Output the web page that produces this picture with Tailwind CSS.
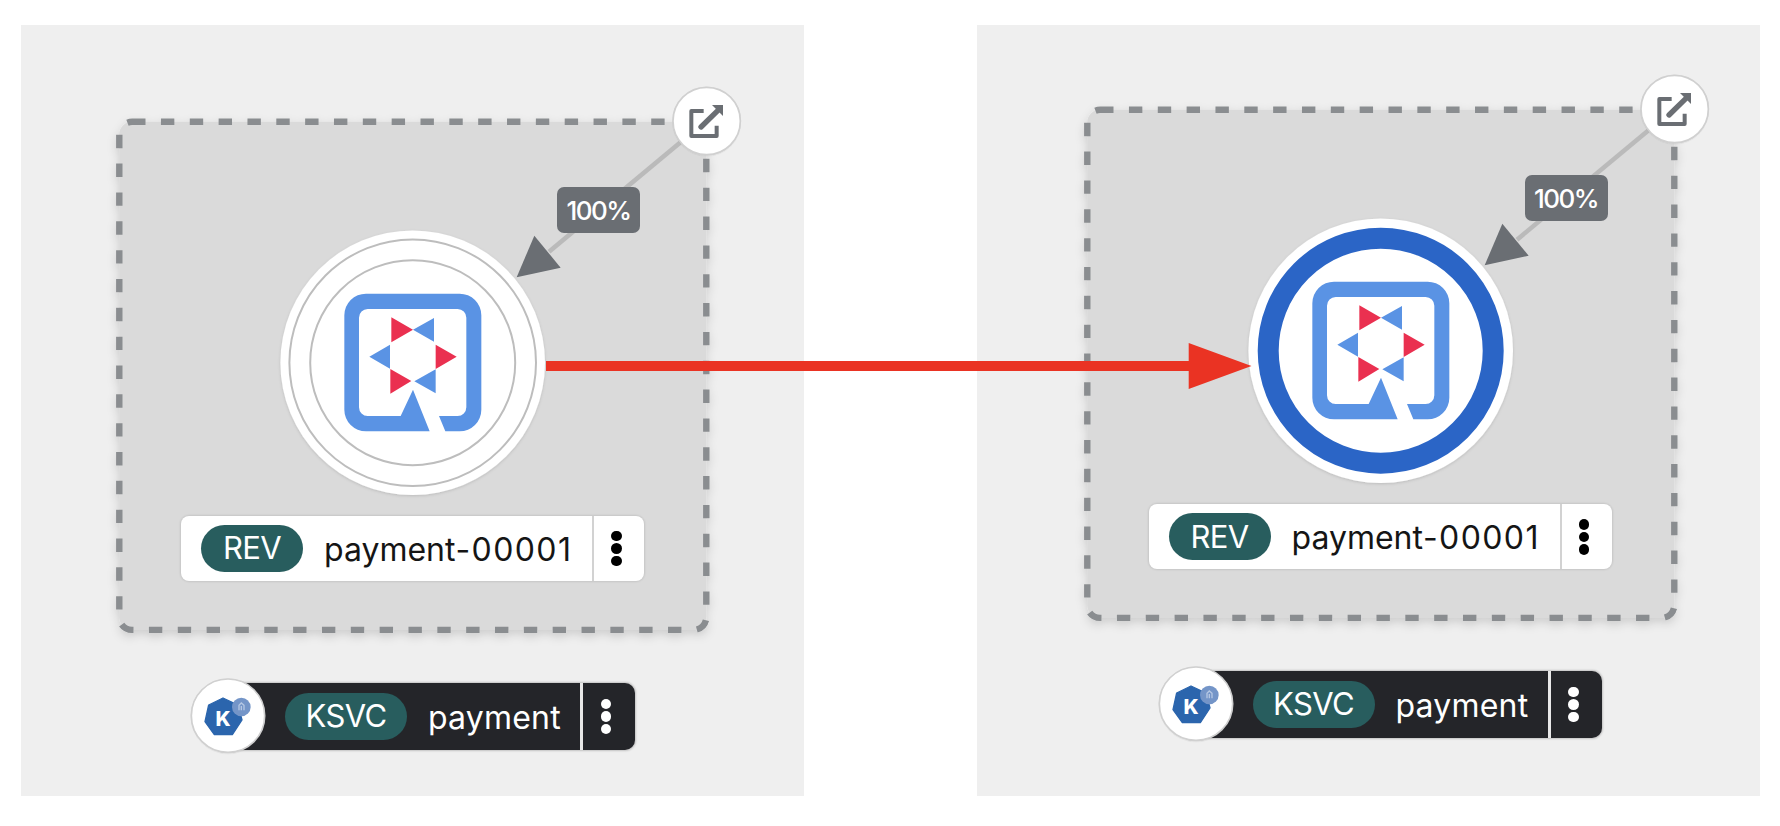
<!DOCTYPE html>
<html lang="en">
<head>
<meta charset="utf-8">
<title>Topology</title>
<script src="https://cdn.jsdelivr.net/npm/@tailwindcss/browser@4"></script>
</head>
<body class="relative h-[826px] w-[1780px] overflow-hidden bg-white font-['Inter',sans-serif]">

<!-- Shared shapes, in panel coordinates -->
<svg class="absolute size-0" aria-hidden="true">
  <defs>
    <filter id="soft" x="-10%" y="-10%" width="120%" height="120%"><feDropShadow dx="0" dy="4" stdDeviation="5" flood-color="#030303" flood-opacity=".14"/></filter>
    <filter id="lift" x="-20%" y="-20%" width="140%" height="140%"><feDropShadow dx="0" dy="1" stdDeviation="1.5" flood-color="#030303" flood-opacity=".14"/></filter>
    <g id="group">
      <rect x="98.3" y="96.8" width="587" height="508.1" rx="12.8" fill="#dadada" stroke="#8a8d90" stroke-width="6.4" stroke-dasharray="13.4 15.44" filter="url(#soft)"/>
      <path d="M685.4 95.8 528 226.7" stroke="#bababa" stroke-width="4.6"/>
    </g>
    <g id="quarkus" transform="translate(249 195) scale(.33333)">
      <path fill="#5a93e4" d="M288 221H569A65 65 0 0 1 634 286V569A65 65 0 0 1 569 634H526L507 588H563A26 26 0 0 0 589 562V293A26 26 0 0 0 563 267H293A26 26 0 0 0 267 293V562A26 26 0 0 0 293 588H392L429 509 479 634H288A65 65 0 0 1 223 569V286A65 65 0 0 1 288 221Z"/>
      <path fill="#5a93e4" d="M429 329 492 294V365ZM298 410 360 374V446ZM433 484 497 448V520Z"/>
      <path fill="#ea3050" d="M429 329 364 292V367ZM560 410 497 374V447ZM424 483 361 447V521Z"/>
    </g>
    <g id="decorators">
      <g transform="translate(409 35) scale(.33333)">
        <path fill="#6a6e73" d="M260 652 313 527 392 623Z"/>
        <circle cx="830" cy="183" r="101" fill="#fff" stroke="#d0d0d0" stroke-width="5" filter="url(#lift)"/>
        <path fill="none" stroke="#6a6e73" stroke-width="12" stroke-linejoin="round" d="M821 153H784V228H860V197"/>
        <path fill="none" stroke="#6a6e73" stroke-width="16" stroke-linecap="round" d="M813 201 864 151"/>
        <path fill="#6a6e73" d="M846 135H879V168Z"/>
      </g>
    </g>
    <g id="knative" transform="translate(159 645) scale(.33333)">
      <circle cx="144" cy="137" r="110" fill="#fff" stroke="#d0d0d0" stroke-width="5" filter="url(#lift)"/>
      <path fill="#2b65ad" stroke="#2b65ad" stroke-width="4" stroke-linejoin="round" d="M129 84 174 105 186 150 157 194H103L75 155 86 105Z"/>
      <circle cx="184" cy="111" r="28" fill="#7495c8"/>
      <path fill="none" stroke="#b5c7e3" stroke-width="4" d="M177 121V106L184 99 192 106V121M184 108V121"/>
    </g>
  </defs>
</svg>

<main class="flex h-[826px] gap-[173px] pt-[25px] pl-[21px]">

  <section class="relative h-[771px] w-[783px] bg-[#efefef]">
    <div class="absolute top-0 left-0 h-[771px] w-[771px]">
      <svg class="absolute inset-0 overflow-visible" width="771" height="771">
        <use href="#group"/>
        <circle cx="391.7" cy="337.7" r="132.3" fill="#fff" filter="url(#lift)"/>
        <circle cx="391.7" cy="337.7" r="123.3" fill="none" stroke="#bdbdbd" stroke-width="2"/>
        <circle cx="391.7" cy="337.7" r="102.5" fill="none" stroke="#bdbdbd" stroke-width="2"/>
        <use href="#quarkus"/>
        <use href="#decorators"/>
      </svg>
      <div class="absolute top-[161.5px] left-[536px] flex h-[46px] w-[83px] items-center justify-center rounded-[7px] bg-[#6a6e73] pt-[2px] text-[26px] font-medium tracking-[-1.5px] text-white">100%</div>
      <div class="absolute top-[491px] left-[160px] flex h-[65px] w-[463px] items-center rounded-[8px] bg-white pl-[20px] shadow-[0_0_2px_1px_#00000018]">
        <span class="flex h-[47px] w-[102px] items-center justify-center rounded-full bg-[#285d5e] text-[31px] tracking-[-0.6px] text-white">REV</span>
        <span class="ml-[21px] w-[268px] whitespace-nowrap pt-[3px] text-[32px] text-[#151515]">payment<span class="tracking-[1.4px]">-00001</span></span>
        <span class="flex h-full flex-1 flex-col items-center justify-center gap-[2px] border-l-2 border-[#d2d2d2] pr-[5px]"><i class="size-[10.5px] rounded-full bg-black"></i><i class="size-[10.5px] rounded-full bg-black"></i><i class="size-[10.5px] rounded-full bg-black"></i></span>
      </div>
      <div class="absolute top-[657.5px] left-[208px] flex h-[67.5px] w-[405.5px] items-center rounded-[10px] bg-[#242529] pl-[56px] shadow-[0_0_2px_1px_#00000030]">
        <span class="flex h-[47px] w-[122px] items-center justify-center rounded-full bg-[#285d5e] text-[31px] tracking-[-0.6px] text-white">KSVC</span>
        <span class="ml-[21px] w-[152px] whitespace-nowrap pt-[3px] text-[32px] tracking-[0.2px] text-white">payment</span>
        <span class="flex h-full flex-1 flex-col items-center justify-center gap-[2px] border-l-3 border-[#e8e8e8] pr-[6px]"><i class="size-[10.5px] rounded-full bg-white"></i><i class="size-[10.5px] rounded-full bg-white"></i><i class="size-[10.5px] rounded-full bg-white"></i></span>
      </div>
      <svg class="absolute inset-0 overflow-visible" width="771" height="771"><use href="#knative"/><text x="202" y="700.5" text-anchor="middle" fill="#fff" font-size="20.5" font-weight="800">K</text></svg>
    </div>
  </section>

  <section class="relative h-[771px] w-[783px] bg-[#efefef]">
    <div class="absolute top-[-11.7px] left-[11.5px] h-[771px] w-[771px]">
      <svg class="absolute inset-0 overflow-visible" width="771" height="771">
        <use href="#group"/>
        <circle cx="391.7" cy="337.7" r="132.3" fill="#fff" filter="url(#lift)"/>
        <circle cx="391.7" cy="337.7" r="112.5" fill="none" stroke="#2b65c6" stroke-width="21"/>
        <use href="#quarkus"/>
        <use href="#decorators"/>
      </svg>
      <div class="absolute top-[161.5px] left-[536px] flex h-[46px] w-[83px] items-center justify-center rounded-[7px] bg-[#6a6e73] pt-[2px] text-[26px] font-medium tracking-[-1.5px] text-white">100%</div>
      <div class="absolute top-[491px] left-[160px] flex h-[65px] w-[463px] items-center rounded-[8px] bg-white pl-[20px] shadow-[0_0_2px_1px_#00000018]">
        <span class="flex h-[47px] w-[102px] items-center justify-center rounded-full bg-[#285d5e] text-[31px] tracking-[-0.6px] text-white">REV</span>
        <span class="ml-[21px] w-[268px] whitespace-nowrap pt-[3px] text-[32px] text-[#151515]">payment<span class="tracking-[1.4px]">-00001</span></span>
        <span class="flex h-full flex-1 flex-col items-center justify-center gap-[2px] border-l-2 border-[#d2d2d2] pr-[5px]"><i class="size-[10.5px] rounded-full bg-black"></i><i class="size-[10.5px] rounded-full bg-black"></i><i class="size-[10.5px] rounded-full bg-black"></i></span>
      </div>
      <div class="absolute top-[657.5px] left-[208px] flex h-[67.5px] w-[405.5px] items-center rounded-[10px] bg-[#242529] pl-[56px] shadow-[0_0_2px_1px_#00000030]">
        <span class="flex h-[47px] w-[122px] items-center justify-center rounded-full bg-[#285d5e] text-[31px] tracking-[-0.6px] text-white">KSVC</span>
        <span class="ml-[21px] w-[152px] whitespace-nowrap pt-[3px] text-[32px] tracking-[0.2px] text-white">payment</span>
        <span class="flex h-full flex-1 flex-col items-center justify-center gap-[2px] border-l-3 border-[#e8e8e8] pr-[6px]"><i class="size-[10.5px] rounded-full bg-white"></i><i class="size-[10.5px] rounded-full bg-white"></i><i class="size-[10.5px] rounded-full bg-white"></i></span>
      </div>
      <svg class="absolute inset-0 overflow-visible" width="771" height="771"><use href="#knative"/><text x="202" y="700.5" text-anchor="middle" fill="#fff" font-size="20.5" font-weight="800">K</text></svg>
    </div>
  </section>
</main>

<!-- Arrow joining both states -->
<svg class="absolute inset-0" width="1780" height="826"><path fill="#ea3323" d="M546 361H1188.7V343L1251.5 366 1188.7 389V371H546Z"/></svg>
</body>
</html>
